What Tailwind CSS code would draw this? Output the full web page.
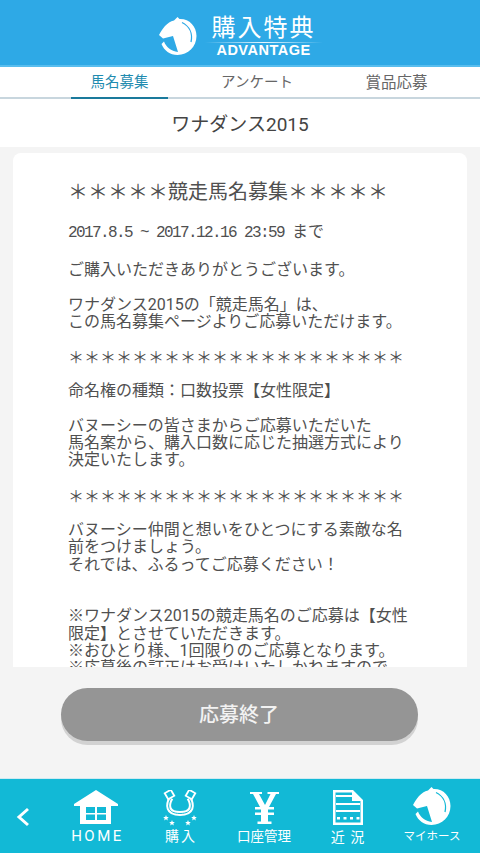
<!DOCTYPE html>
<html lang="ja">
<head>
  <meta charset="UTF-8" />
  <meta name="viewport" content="width=device-width, initial-scale=1" />
  <title>購入特典</title>
  <script src="https://cdn.jsdelivr.net/npm/@tailwindcss/browser@4"></script>
</head>
<body class="bg-[#f4f4f4] font-['Roboto','Noto_Sans_CJK_JP',sans-serif] text-[#505050]">
  <div class="flex h-[853px] w-[480px] flex-col overflow-hidden">

    <!-- header -->
    <header class="relative flex h-[67px] shrink-0 items-center justify-center gap-[8px] border-b-2 border-[#58bdee] bg-[#2ea9e6] pl-px">
      <svg class="mt-[6px] h-[38px] w-[38px]" viewBox="0 0 38 38">
        <path fill="#fff" d="M18.500 0 L20.500 2 C30 1.500 37.500 9 37.500 19 C37.500 29.500 29 38 18.500 38 C11 38 5 33.500 2.500 27 L5 24.500 C7 30 12 34 19 35 L14 19 L4 21.500 L0 18 C3 12 8 5 15 3.500 Z"/>
        <path fill="none" stroke="#2ea9e6" stroke-width="1.300" d="M23 5.500 C30 9 34 16 32 25"/>
      </svg>
      <div class="mt-[6px] flex w-[118px] flex-col items-center">
        <div class="text-[24px] leading-[28px] tracking-[2px] text-white">購入特典</div>
        <div class="h-px w-full bg-gradient-to-r from-white/0 via-white/90 to-white/0"></div>
        <div class="font-['Liberation_Sans'] text-[14.5px] leading-[15px] font-bold tracking-[0.5px] text-white">ADVANTAGE</div>
      </div>
    </header>

    <!-- tabs -->
    <nav class="grid h-[32px] shrink-0 grid-cols-[71px_97px_1fr_1fr] grid-rows-[30px] border-b-2 border-[#c8d6de] bg-white leading-[28px]">
      <span></span>
      <a class="h-[32px] border-b-2 border-[#1a7a9c] pt-[2px] text-center text-[14.5px] text-[#1f8cb0]">馬名募集</a>
      <a class="pt-[2px] pl-[22px] text-center text-[14.5px] text-[#666]">アンケート</a>
      <a class="pt-[2px] pr-[11px] text-center text-[15.5px] text-[#666]">賞品応募</a>
    </nav>

    <!-- title -->
    <h1 class="flex h-[48px] shrink-0 items-center justify-center bg-white pt-[5px] text-[19px] font-normal text-[#444]">ワナダンス2015</h1>

    <!-- card -->
    <main class="mx-[13px] mt-[6px] h-[514px] shrink-0 overflow-hidden rounded-t-lg bg-white pt-[26px] pl-[55px] text-[16px] leading-[17.25px]">
      <p class="text-[20px] leading-[26px] whitespace-nowrap">＊＊＊＊＊競走馬名募集＊＊＊＊＊</p>
      <p class="mt-[18px] whitespace-nowrap"><span class="font-['Liberation_Mono'] tracking-[-1.6px]">2017.8.5 ~ 2017.12.16 23:59 </span>まで</p>
      <p class="mt-[19px]">ご購入いただきありがとうございます。</p>
      <p class="mt-[17.25px] whitespace-nowrap">ワナダンス2015の「競走馬名」は、<br>この馬名募集ページよりご応募いただけます。</p>
      <p class="mt-[18.25px] whitespace-nowrap">＊＊＊＊＊＊＊＊＊＊＊＊＊＊＊＊＊＊＊＊＊</p>
      <p class="mt-[16.25px]">命名権の種類：口数投票【女性限定】</p>
      <p class="mt-[17.25px] whitespace-nowrap">バヌーシーの皆さまからご応募いただいた<br>馬名案から、購入口数に応じた抽選方式により<br>決定いたします。</p>
      <p class="mt-[19.25px] whitespace-nowrap">＊＊＊＊＊＊＊＊＊＊＊＊＊＊＊＊＊＊＊＊＊</p>
      <p class="mt-[16.25px] whitespace-nowrap">バヌーシー仲間と想いをひとつにする素敵な名<br>前をつけましょう。<br>それでは、ふるってご応募ください！</p>
      <p class="mt-[34.5px] whitespace-nowrap">※ワナダンス2015の競走馬名のご応募は【女性<br>限定】とさせていただきます。<br>※おひとり様、1回限りのご応募となります。<br>※応募後の訂正はお受けいたしかねますので</p>
    </main>

    <!-- button -->
    <div class="flex flex-1 items-start justify-center pt-[21px] pr-[2px]">
      <button class="h-[53px] w-[357px] rounded-full bg-[#959595] pt-px text-[20px] font-medium text-[#f2f2f2] shadow-[0_4px_0_#d2d2d2]">応募終了</button>
    </div>

    <!-- footer nav -->
    <footer class="grid h-[75px] shrink-0 grid-cols-[54px_repeat(5,84px)] border-t border-[#cfeaf2] bg-[#12b9d6] text-white">
      <div class="flex items-center pt-[2px] pl-[16px]">
        <svg class="h-[20px] w-[14px]" viewBox="0 0 14 20"><path fill="none" stroke="#fff" stroke-width="3" d="M12 2 L3 10 L12 18"/></svg>
      </div>
      <a class="flex flex-col items-center">
        <svg class="mt-[11px] h-[34px] w-[44px]" viewBox="0 0 44 34">
          <path fill="#fff" fill-rule="evenodd" d="M22 0 L44 14 L44 16 L37 16 L37 34 L6 34 L6 16 L0 16 L0 14 Z M12 17 V30 H32 V17 Z"/>
          <path fill="#fff" d="M21 17 h2 v13 h-2 Z M12 23 h20 v1.500 h-20 Z"/>
        </svg>
        <span class="mt-[5px] pl-[3px] text-[15px] leading-[14px] tracking-[2.5px]">HOME</span>
      </a>
      <a class="flex flex-col items-center">
        <svg class="mt-[11px] h-[36px] w-[34px]" viewBox="0 0 34 36">
          <path fill="none" stroke="#fff" stroke-width="5" d="M8 8 C4 15 4 23.500 17 23.500 C30 23.500 30 15 26 8"/>
          <path fill="none" stroke="#12b9d6" stroke-width="1" d="M8 8 C4 15 4 23.500 17 23.500 C30 23.500 30 15 26 8"/>
          <rect x="3" y="1" width="7" height="7" fill="#12b9d6" stroke="#fff" stroke-width="1.800" transform="rotate(-30 6.500 4.500)"/>
          <rect x="24" y="1" width="7" height="7" fill="#12b9d6" stroke="#fff" stroke-width="1.800" transform="rotate(30 27.500 4.500)"/>
          <path fill="#fff" d="M3 25 l.8 1.900 2 .2 -1.500 1.300 .5 2 -1.800 -1.100 -1.800 1.100 .5 -2 -1.500 -1.300 2 -.2 Z M31 25 l.8 1.900 2 .2 -1.500 1.300 .5 2 -1.800 -1.100 -1.800 1.100 .5 -2 -1.500 -1.300 2 -.2 Z M9 30 l.8 1.900 2 .2 -1.500 1.300 .5 2 -1.800 -1.100 -1.800 1.100 .5 -2 -1.500 -1.300 2 -.2 Z M25 30 l.8 1.900 2 .2 -1.500 1.300 .5 2 -1.800 -1.100 -1.800 1.100 .5 -2 -1.500 -1.300 2 -.2 Z"/>
        </svg>
        <span class="mt-[3px] pl-[2px] text-[14px] leading-[14px] tracking-[2px]">購入</span>
      </a>
      <a class="flex flex-col items-center">
        <svg class="mt-[13px] h-[32px] w-[29px]" viewBox="0 0 29 32">
          <path fill="#fff" d="M0 0 H12 V2 H9 L15 13 L20.500 2 H17.500 V0 H29 V2 H26 L19 15 H24 V17.500 H18 V20.500 H24 V23 H18 V29.500 H21.500 V32 H7.500 V29.500 H11 V23 H5 V20.500 H11 V17.500 H5 V15 H10 L3 2 H0 Z"/>
        </svg>
        <span class="mt-[5px] text-[13.500px] leading-[14px] whitespace-nowrap">口座管理</span>
      </a>
      <a class="flex flex-col items-center">
        <svg class="mt-[11px] h-[35px] w-[30px]" viewBox="0 0 30 35">
          <path fill="#fff" fill-rule="evenodd" d="M0 0 H20 L30 10 V35 H0 Z M2.500 2.500 V32.500 H27.500 V11 H19 V2.500 Z"/>
          <path fill="#fff" d="M3 5 H19 V7 H3 Z M3 13 H27 V15 H3 Z M3 20 H27 V22 H3 Z M4 27 h3 v2.500 h-3 Z M10.500 27 h3 v2.500 h-3 Z M17 27 h3 v2.500 h-3 Z M23.500 27 h3 v2.500 h-3 Z"/>
        </svg>
        <span class="mt-[5px] text-[14px] leading-[14px] tracking-[1px] whitespace-pre">近 況</span>
      </a>
      <a class="flex flex-col items-center">
        <svg class="mt-[8px] h-[38px] w-[38px]" viewBox="0 0 38 38">
          <path fill="#fff" d="M18.500 0 L20.500 2 C30 1.500 37.500 9 37.500 19 C37.500 29.500 29 38 18.500 38 C11 38 5 33.500 2.500 27 L5 24.500 C7 30 12 34 19 35 L14 19 L4 21.500 L0 18 C3 12 8 5 15 3.500 Z"/>
          <path fill="none" stroke="#12b9d6" stroke-width="1.300" d="M23 5.500 C30 9 34 16 32 25"/>
        </svg>
        <span class="mt-[4px] text-[11.500px] leading-[14px] whitespace-nowrap">マイホース</span>
      </a>
    </footer>
  </div>
</body>
</html>
